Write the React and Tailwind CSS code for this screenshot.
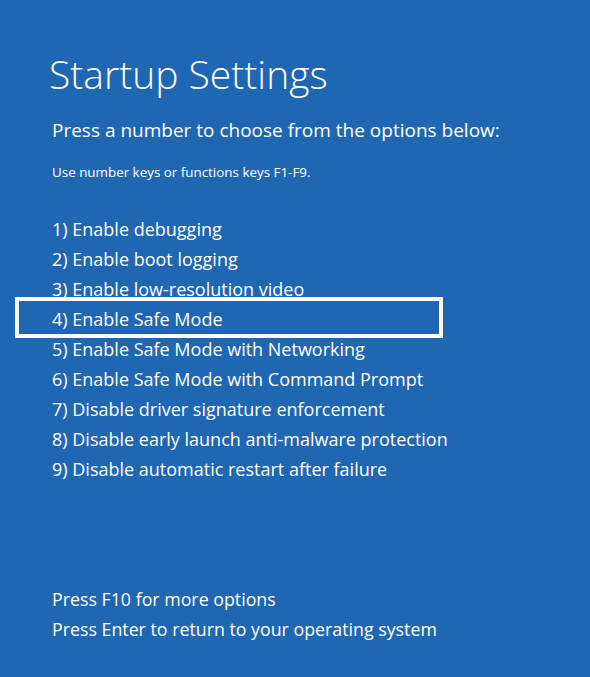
import React from 'react';

const options = [
  '1) Enable debugging',
  '2) Enable boot logging',
  '3) Enable low-resolution video',
  '4) Enable Safe Mode',
  '5) Enable Safe Mode with Networking',
  '6) Enable Safe Mode with Command Prompt',
  '7) Disable driver signature enforcement',
  '8) Disable early launch anti-malware protection',
  '9) Disable automatic restart after failure',
];

export default function App() {
  return (
    <div className="w-[590px] h-[677px] bg-[#2067b3] text-white overflow-hidden" style={{ fontFamily: '"Open Sans", "Noto Sans", sans-serif' }}>
      <div className="pl-[52px] pt-[50px]">
        <h1 className="text-[39px] leading-[48px] font-light -ml-[3px]">Startup Settings</h1>
        <p className="mt-[20px] text-[19px] leading-[24px]">Press a number to choose from the options below:</p>
        <p className="mt-[21px] text-[13.4px] leading-[18px]">Use number keys or functions keys F1-F9.</p>

        <ul className="mt-[33px]">
          {options.map((opt, i) => (
            <li key={i} className="relative text-[18px] leading-[30px]">
              {i === 3 && (
                <span className="absolute -left-[37px] top-[-7px] w-[428px] h-[41px] border-4 border-white" />
              )}
              {opt}
            </li>
          ))}
        </ul>

        <div className="mt-[100px] text-[17.8px] leading-[30px]">
          <p>Press F10 for more options</p>
          <p>Press Enter to return to your operating system</p>
        </div>
      </div>
    </div>
  );
}
